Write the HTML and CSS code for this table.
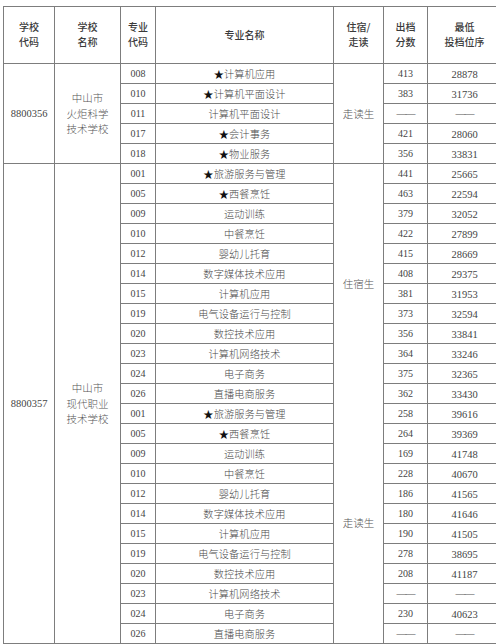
FILE: index.html
```html
<!DOCTYPE html>
<html lang="zh-CN">
<head>
<meta charset="utf-8">
<title>投档情况</title>
<link rel="stylesheet" href="styles.css">
</head>
<body>
<table class="sheet">
  <colgroup>
    <col class="c-code"><col class="c-name"><col class="c-mcode"><col class="c-major"><col class="c-stay"><col class="c-score"><col class="c-rank">
  </colgroup>
  <thead>
    <tr class="head">
      <th>学校<br>代码</th><th>学校<br>名称</th><th>专业<br>代码</th><th>专业名称</th><th>住宿/<br>走读</th><th>出档<br>分数</th><th>最低<br>投档位序</th>
    </tr>
  </thead>
  <tbody>
    <tr><td class="num school" rowspan="5">8800356</td><td class="sname" rowspan="5">中山市<br>火炬科学<br>技术学校</td><td class="num">008</td><td class="major"><span class="star">★</span>计算机应用</td><td class="stay" rowspan="5">走读生</td><td class="num">413</td><td class="num rank">28878</td></tr>
    <tr><td class="num">010</td><td class="major"><span class="star">★</span>计算机平面设计</td><td class="num">383</td><td class="num rank">31736</td></tr>
    <tr><td class="num">011</td><td class="major">计算机平面设计</td><td class="dash">——</td><td class="dash">——</td></tr>
    <tr><td class="num">017</td><td class="major"><span class="star">★</span>会计事务</td><td class="num">421</td><td class="num rank">28060</td></tr>
    <tr><td class="num">018</td><td class="major"><span class="star">★</span>物业服务</td><td class="num">356</td><td class="num rank">33831</td></tr>

    <tr><td class="num school" rowspan="24">8800357</td><td class="sname" rowspan="24">中山市<br>现代职业<br>技术学校</td><td class="num">001</td><td class="major"><span class="star">★</span>旅游服务与管理</td><td class="stay top" rowspan="12">住宿生</td><td class="num">441</td><td class="num rank">25665</td></tr>
    <tr><td class="num">005</td><td class="major"><span class="star">★</span>西餐烹饪</td><td class="num">463</td><td class="num rank">22594</td></tr>
    <tr><td class="num">009</td><td class="major">运动训练</td><td class="num">379</td><td class="num rank">32052</td></tr>
    <tr><td class="num">010</td><td class="major">中餐烹饪</td><td class="num">422</td><td class="num rank">27899</td></tr>
    <tr><td class="num">012</td><td class="major">婴幼儿托育</td><td class="num">415</td><td class="num rank">28669</td></tr>
    <tr><td class="num">014</td><td class="major">数字媒体技术应用</td><td class="num">408</td><td class="num rank">29375</td></tr>
    <tr><td class="num">015</td><td class="major">计算机应用</td><td class="num">381</td><td class="num rank">31953</td></tr>
    <tr><td class="num">019</td><td class="major">电气设备运行与控制</td><td class="num">373</td><td class="num rank">32594</td></tr>
    <tr><td class="num">020</td><td class="major">数控技术应用</td><td class="num">356</td><td class="num rank">33841</td></tr>
    <tr><td class="num">023</td><td class="major">计算机网络技术</td><td class="num">364</td><td class="num rank">33246</td></tr>
    <tr><td class="num">024</td><td class="major">电子商务</td><td class="num">375</td><td class="num rank">32365</td></tr>
    <tr><td class="num">026</td><td class="major">直播电商服务</td><td class="num">362</td><td class="num rank">33430</td></tr>

    <tr><td class="num">001</td><td class="major"><span class="star">★</span>旅游服务与管理</td><td class="stay bottom" rowspan="12">走读生</td><td class="num">258</td><td class="num rank">39616</td></tr>
    <tr><td class="num">005</td><td class="major"><span class="star">★</span>西餐烹饪</td><td class="num">264</td><td class="num rank">39369</td></tr>
    <tr><td class="num">009</td><td class="major">运动训练</td><td class="num">169</td><td class="num rank">41748</td></tr>
    <tr><td class="num">010</td><td class="major">中餐烹饪</td><td class="num">228</td><td class="num rank">40670</td></tr>
    <tr><td class="num">012</td><td class="major">婴幼儿托育</td><td class="num">186</td><td class="num rank">41565</td></tr>
    <tr><td class="num">014</td><td class="major">数字媒体技术应用</td><td class="num">180</td><td class="num rank">41646</td></tr>
    <tr><td class="num">015</td><td class="major">计算机应用</td><td class="num">190</td><td class="num rank">41505</td></tr>
    <tr><td class="num">019</td><td class="major">电气设备运行与控制</td><td class="num">278</td><td class="num rank">38695</td></tr>
    <tr><td class="num">020</td><td class="major">数控技术应用</td><td class="num">208</td><td class="num rank">41187</td></tr>
    <tr><td class="num">023</td><td class="major">计算机网络技术</td><td class="dash">——</td><td class="dash">——</td></tr>
    <tr><td class="num">024</td><td class="major">电子商务</td><td class="num">230</td><td class="num rank">40623</td></tr>
    <tr><td class="num">026</td><td class="major">直播电商服务</td><td class="dash">——</td><td class="dash">——</td></tr>
  </tbody>
</table>
</body>
</html>
```

FILE: styles.css
```css
html, body {
  margin: 0;
  padding: 0;
  background: #ffffff;
  overflow: hidden;
}

body {
  padding: 6px 0 0 3px;
  width: 496px;
  height: 644px;
  box-sizing: border-box;
}

.sheet {
  border-collapse: collapse;
  table-layout: fixed;
  width: 498px;
  font-family: "Noto Sans CJK SC", "Noto Sans", sans-serif;
  color: #454545;
}

.c-code  { width: 51px; }
.c-name  { width: 66px; }
.c-mcode { width: 35px; }
.c-major { width: 178px; }
.c-stay  { width: 50px; }
.c-score { width: 44px; }
.c-rank  { width: 74px; }

.sheet th,
.sheet td {
  border: 1px solid #7d7d7d;
  padding: 0;
  text-align: center;
  vertical-align: middle;
  overflow: hidden;
  white-space: nowrap;
}

.head {
  height: 57px;
}

.head th {
  font-weight: 500;
  font-size: 10px;
  line-height: 14.6px;
  color: #3a3a3a;
}

.sheet tbody tr {
  height: 20px;
}

.sheet td {
  font-size: 10.2px;
  line-height: 12px;
  font-weight: 300;
}

.num {
  font-family: "Liberation Serif", "Times New Roman", serif;
  font-size: 10px !important;
  font-weight: 400 !important;
  color: #444;
}

.rank {
  font-size: 10.5px !important;
  padding-top: 2px !important;
}

.school {
  font-size: 10.5px !important;
}

.sname {
  font-size: 10.5px !important;
  line-height: 15.5px !important;
  color: #555;
}

.major {
  letter-spacing: 0.1px;
  color: #4a4a4a;
}

.star {
  color: #111;
  font-weight: 700;
}

.stay {
  font-size: 10.5px !important;
  color: #555;
}

.stay.top {
  border-bottom-style: hidden;
}

.stay.bottom {
  border-top-style: hidden;
}

.dash {
  font-family: "Liberation Serif", serif;
  font-size: 10px !important;
  color: #555;
  letter-spacing: -1px;
}
```
